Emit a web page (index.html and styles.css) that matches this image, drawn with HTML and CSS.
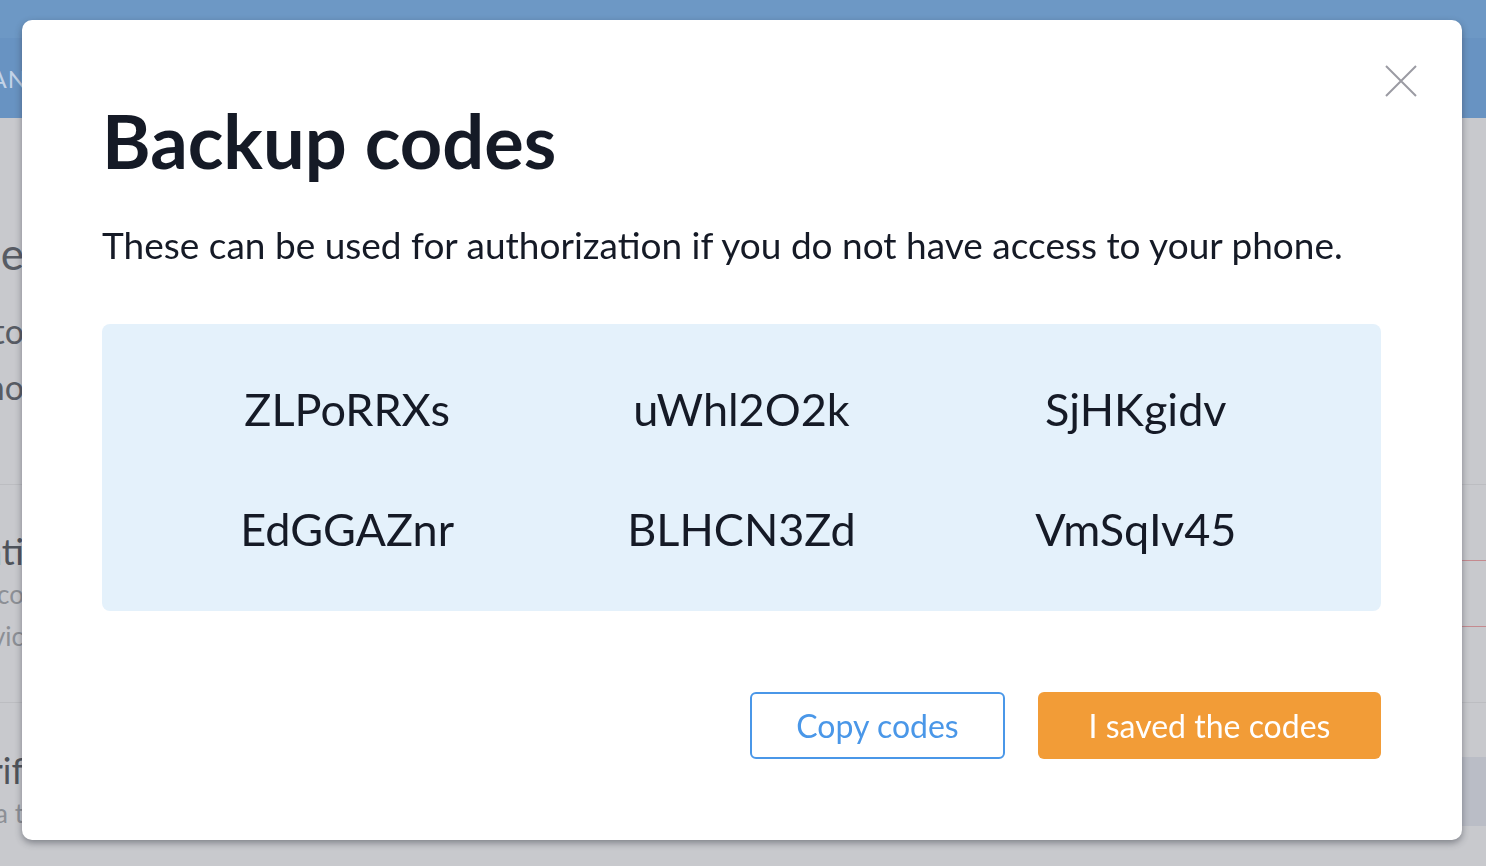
FILE: index.html
```html
<!DOCTYPE html>
<html lang="en">
<head>
<meta charset="utf-8">
<title>Backup codes</title>
<link rel="stylesheet" href="styles.css">
</head>
<body>
<div class="page">
  <div class="topbar"></div>
  <header class="header">
    <div class="clip clip-nav"><span class="nav">PLAN</span></div>
  </header>
  <section class="sec sec1">
    <div class="clip">
      <div class="line l-big">Security profile</div>
      <div class="line l-mid">Protect your account with a second facto</div>
      <div class="line l-mid">when signing in from a new device, see ho</div>
    </div>
  </section>
  <section class="sec sec2">
    <div class="clip">
      <div class="line l-head">Notificati</div>
      <div class="line l-sub">Receive codes by sms to your co</div>
      <div class="line l-sub">or to the app on your mobile devic</div>
    </div>
    <div class="field"></div>
  </section>
  <section class="sec sec3">
    <div class="clip">
      <div class="line l-head">Verif</div>
      <div class="line l-sub">Confirm your phone numbers with a t</div>
    </div>
    <div class="band"></div>
  </section>
</div>

<div class="modal" role="dialog" aria-labelledby="modal-title">
  <button class="close" aria-label="Close">
    <svg width="32" height="32" viewBox="0 0 32 32" aria-hidden="true"><path d="M1 1L31 31M31 1L1 31"/></svg>
  </button>
  <h1 class="title" id="modal-title">Backup codes</h1>
  <p class="desc">These can be used for authorization if you do not have access to your phone.</p>
  <div class="codes">
    <span>ZLPoRRXs</span>
    <span>uWhl2O2k</span>
    <span>SjHKgidv</span>
    <span>EdGGAZnr</span>
    <span>BLHCN3Zd</span>
    <span>VmSqIv45</span>
  </div>
  <div class="actions">
    <button class="btn btn-outline">Copy codes</button>
    <button class="btn btn-primary">I saved the codes</button>
  </div>
</div>
</body>
</html>
```

FILE: styles.css
```css
* { box-sizing: border-box; }

html, body {
  margin: 0;
  height: 100%;
}

body {
  background: #c8c9cd;
  font-family: "Lato", "Open Sans", sans-serif;
  overflow: hidden;
}

/* ---------- background page (dimmed) ---------- */
.page {
  display: flex;
  flex-direction: column;
}

.topbar {
  height: 38px;
  background: #6d98c5;
}

.header {
  height: 80px;
  background: #6893c2;
  display: flex;
  align-items: center;
}

.clip {
  width: 24px;
  flex: none;
  overflow: hidden;
  display: flex;
  flex-direction: column;
}

.clip-nav { width: 27px; }

.nav, .line {
  display: flex;
  justify-content: flex-end;
  white-space: nowrap;
}

.nav {
  color: #c3d3e7;
  font-size: 24px;
  letter-spacing: 1px;
}

.sec {
  display: flex;
  justify-content: space-between;
  align-items: flex-start;
  border-bottom: 1px solid #bcbdc1;
}

.sec1 { padding: 111px 0 69px; }
.sec2 { padding: 44px 0 38px; height: 218px; }
.sec3 { padding: 45px 0 0; border-bottom: none; height: 163px; }

.l-big { font-size: 44px; line-height: 48px; color: #585c64; margin-bottom: 26px; }
.l-mid { font-size: 34px; line-height: 56px; color: #585c64; }
.l-head { font-size: 36px; line-height: 44px; color: #4f535a; }
.l-sub { font-size: 26px; line-height: 42px; color: #8c8f95; }

.field {
  width: 520px;
  height: 67px;
  margin-top: 31px;
  border-top: 1px solid #c58a8f;
  border-bottom: 1px solid #c58a8f;
}

.band {
  width: 420px;
  height: 69px;
  margin-top: 9px;
  background: #babdc6;
}

/* ---------- modal ---------- */
.modal {
  position: fixed;
  left: 22px;
  top: 20px;
  width: 1440px;
  height: 820px;
  background: #fff;
  border-radius: 10px;
  box-shadow: 0 3px 7px rgba(40, 44, 56, 0.45);
  padding: 85px 81px 81px 80px;
  color: #151a26;
  display: flex;
  flex-direction: column;
}

.close {
  position: absolute;
  top: 45px;
  right: 45px;
  width: 32px;
  height: 32px;
  padding: 0;
  border: 0;
  background: transparent;
  cursor: pointer;
}

.close svg {
  display: block;
  stroke: #9b9ba3;
  stroke-width: 2;
  fill: none;
}

.title {
  margin: 0;
  font-size: 74px;
  line-height: 72px;
  font-weight: 700;
}

.desc {
  margin: 48px 0 0;
  font-size: 37px;
  line-height: 40px;
}

.codes {
  margin-top: 59px;
  background: #e4f1fb;
  border-radius: 8px;
  padding: 55px 48px 52px;
  display: grid;
  grid-template-columns: repeat(3, 1fr);
  row-gap: 60px;
  text-align: center;
  font-size: 45px;
  line-height: 60px;
}

.actions {
  margin-top: 81px;
  display: flex;
  justify-content: flex-end;
  gap: 33px;
}

.btn {
  height: 67px;
  border-radius: 6px;
  font-family: inherit;
  font-size: 32px;
  padding: 0;
  cursor: pointer;
}

.btn-outline {
  width: 255px;
  background: #fff;
  color: #4a97e8;
  border: 2px solid #4a97e8;
}

.btn-primary {
  width: 343px;
  background: #f29c37;
  color: #fff;
  border: 0;
}
```
